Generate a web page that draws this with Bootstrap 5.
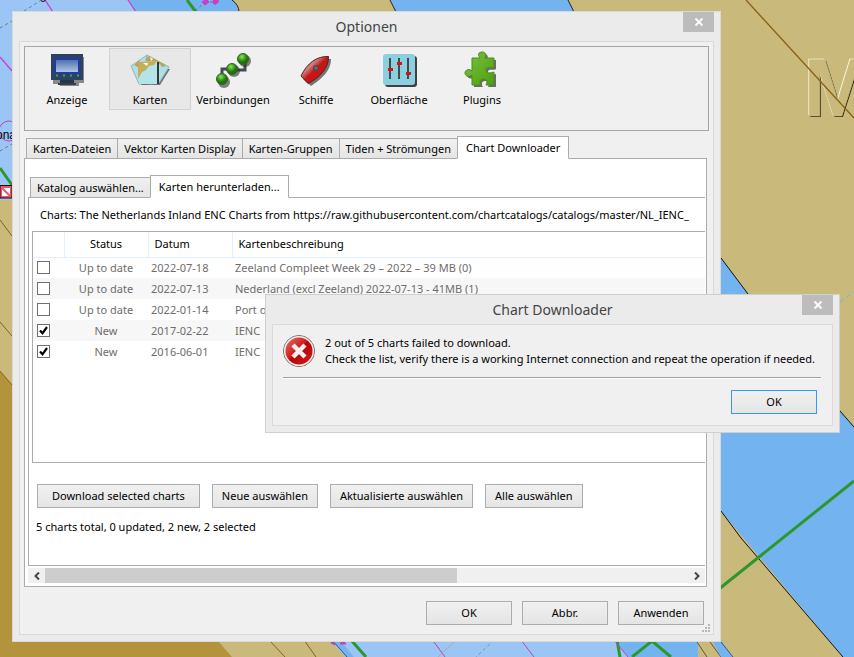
<!DOCTYPE html>
<html lang="de">
<head>
<meta charset="utf-8">
<meta name="viewport" content="width=device-width, initial-scale=1">
<title>Optionen</title>
<link href="https://cdn.jsdelivr.net/npm/bootstrap@5.3.0/dist/css/bootstrap.min.css" rel="stylesheet">
<style>
body { font: 11px/16px "Noto Sans", "Open Sans", sans-serif; color: #000; }
.desktop { height: 100vh; background: #c9b97a; }
.chart-map { width: 100%; height: 100%; }
.win { background: #ebebeb; border: 1px solid #d9d9d9; }
.win-main { left: 12px; right: 133px; top: 11px; padding: 0 6px 6px; }
.win-msg { left: 265px; right: 14px; top: 294px; padding: 0 6px 6px; border-color: #cfcfcf; }
.win-title { height: 29px; font-size: 14px; line-height: 29px; color: #444; text-align: center; }
.win-close { right: 6px; top: 0; width: 31px; height: 20px; background: #bcbcbc; border: 0; padding: 0; }
.client { background: #f0f0f0; border: 1px solid #dadada; }
.client-main { padding: 4px 4px 9px; }
.toolbox { border: 1px solid #a5a5a5; height: 85px; padding: 1px; }
.tool { width: 82px; height: 62px; margin-right: 1px; border: 1px solid transparent; background: none; padding: 2px 0 0; white-space: nowrap; color: #000; }
.tool.active { background: #e8e8e8; border-color: #d2d2d2; }
.tool svg { width: 40px; height: 40px; margin-bottom: 1px; }
.tabs { border: 0; padding-left: 2px; position: relative; }
.tabs-outer { margin-top: 5px; }
.tabs .nav-link { border: 1px solid #acacac; border-radius: 0; background: linear-gradient(#f0f0f0, #e5e5e5); color: #000; height: 21px; padding: 0 6px; line-height: 19px; margin: 0 -1px -1px 0; }
.tabs .nav-link.active { background: #fff; color: #000; height: 23px; padding: 0 8px; border-color: #acacac; border-bottom-color: #fff; }
.page { background: #fff; border: 1px solid #acacac; }
.page-outer { padding: 16px 1px 3px 3px; margin-right: 2px; }
.page-inner { border-right: 0; padding: 9px 0 30px 3px; }
.source { padding: 0 0 0 8px; margin-bottom: 8px; overflow: hidden; white-space: nowrap; }
.list { border: 1px solid #acacac; border-right: 0; height: 232px; overflow: hidden; }
.list table { width: 100%; table-layout: fixed; color: #6d6d6d; white-space: nowrap; }
.list th { height: 25px; padding: 0 6px; font-weight: 400; color: #000; border-bottom: 1px solid #e3effa; border-right: 1px solid #e3effa; }
.list th:last-child { border-right: 0; }
.list td { height: 21px; padding: 0 3px; }
.list tbody tr:nth-child(even) { background: #f7f7f7; }
.c-check { width: 31px; } .c-mid { width: 84px; }
.tick { appearance: none; display: block; width: 13px; height: 13px; margin: 0 1px; border: 1px solid #707070; background: #fff; }
.tick:checked { background: #fff url("data:image/svg+xml,%3Csvg xmlns='http://www.w3.org/2000/svg' viewBox='0 0 11 11'%3E%3Cpath d='M2 5.5 4.5 8.3 9 2' fill='none' stroke='%23000' stroke-width='2.2'/%3E%3C/svg%3E") center/11px no-repeat; }
.push { height: 24px; border: 1px solid #acacac; border-radius: 0; background: linear-gradient(#f0f0f0, #e5e5e5); color: #000; line-height: 16px; padding: 0 9px; white-space: nowrap; }
.push-wide { padding: 0 14px; }
.push-fixed { width: 86px; padding: 0; }
.push-focus { border-color: #3399ff; }
.actions { margin: 21px 0 11px 5px; gap: 12px; }
.scroll { height: 15px; margin-top: 2px; background: #f0f0f0; }
.scroll button { width: 17px; border: 0; background: none; padding: 0; line-height: 0; }
.thumb { width: 64%; background: #cdcdcd; }
.foot { gap: 10px; margin: 14px 5px 0 0; }
.grip { right: 9px; bottom: 8px; width: 9px; height: 9px; }
.msg-body { padding: 10px 11px 11px 10px; }
.msg-line { border-top: 1px solid #a0a0a0; border-bottom: 1px solid #fff; margin: 8px 0 11px; }
</style>
</head>
<body>
<main class="desktop position-relative overflow-hidden">
  <svg class="chart-map d-block" viewBox="0 0 854 657" preserveAspectRatio="xMinYMin slice" aria-hidden="true">
    <path fill="#c9b97a" d="M0 0h854v657H0z"/>
    <path fill="#9bc5f5" d="M0 0H140V200H0z"/>
    <path fill="#73b4f0" d="M129 0H232q7 5 6 12H136z"/>
    <path fill="#73b4f0" d="M391 0H568l6 12H396z"/>
    <path d="M232 0q7 5 7 12M390 0l6 12M568 0l6 12" fill="none" stroke="#222"/>
    <path fill="#b3933b" d="M0 371 12 385 240 657H0z"/>
    <path d="M0 220l12 16M0 322l12 14M0 371l12 14" stroke="#8a6118" fill="none"/>
    <path fill="#b3933b" d="M0 600H217L232 657H0z"/>
    <path fill="#c9b97a" d="M217 640H345V657H232z"/>
    <path fill="#9bc5f5" d="M330 640H630V657H345z"/>
    <path fill="#73b4f0" d="M332 640h8l14 17h-8zM614 640h84v17h-70z"/>
    <path fill="#c9b97a" d="M696 640h14l10 17h-14z"/>
    <path d="M269 640l16 17M304 640l12 17" stroke="#8a6118" fill="none"/>
    <path d="M351 640l15 17M617 640l3 17M632 657l20-16 19 16" stroke="#2e962e" stroke-width="3" fill="none"/>
    <path d="M521 640l13 17M614 640l14 17M434 642l11 15" stroke="#c63fc6" fill="none"/>
    <path d="M434 642l11 15M494 640l-18 17" stroke="#888" stroke-dasharray="3 3" fill="none"/>
    <path d="M455 641l-17 16" stroke="#aaa" fill="none"/>
    <path d="M332 641l3 4-4-2zM340 644l3-4 3 4z" stroke="#c63fc6" fill="#c63fc6"/>
    <path d="M332 640l15 17M697 642l10 15M710 642l11 15" stroke="#555" fill="none"/>
    <path fill="#73b4f0" d="M721 258 748 294 840 411 854 427V657H843L721 511z"/>
    <path d="M721 258l27 36 92 117 14 16M721 511l20 27 102 119" stroke="#111" fill="none"/>
    <path fill="#73b4f0" d="M712 640h9l12 17h-12z"/>
    <path d="M721 642l12 15" stroke="#555"/>
    <path d="M719 589 854 481" stroke="#2e962e" stroke-width="3"/>
    <path d="M840 302l14-10" stroke="#73b4f0" stroke-dasharray="5 3" fill="none"/>
    <g font-family="Liberation Sans, sans-serif" font-size="81" font-weight="700">
      <text x="805" y="117" fill="#2c2818">M</text>
      <text x="803" y="115" fill="#fbf6e2">M</text>
      <text x="804" y="116" fill="#c9b97a" stroke="#c9b97a" stroke-width=".6">M</text>
    </g>
    <path d="M746 0 854 118" stroke="#8a6118" stroke-width="1.3"/>
    <path d="M45 0l8 12M128 0l8 12M0 57l12 14" stroke="#c63fc6" stroke-width="1.3"/>
    <path d="M24 11 40 1M0 28l12-7M0 151l12-7M195 11l10-9" stroke="#777" stroke-dasharray="3 3"/>
    <path d="M187 0l9 12M0 168l12 17" stroke="#2e962e" stroke-width="3"/>
    <circle cx="9" cy="131" r="10" fill="none" stroke="#c63fc6"/>
    <circle cx="43" cy="-1" r="2.5" fill="none" stroke="#111"/>
    <path d="M202 2l4-3 3 3-4 3zM210 2h6M213-1a3 3 0 1 1 0 4" fill="#c63fc6" stroke="#c63fc6"/>
    <text x="-4" y="139" font-size="12" font-family="Liberation Sans, sans-serif">ona</text>
    <path d="M0 185.500H12V198H0z" fill="#ee5468" stroke="#111"/>
    <path d="M2 188h8v8H2z" fill="#fff"/><path d="M2 188l8 8" stroke="#ee5468" stroke-width="2"/>
  </svg>

  <section class="win win-main position-absolute" aria-label="Optionen">
    <h1 class="win-title m-0 fw-normal">Optionen</h1>
    <button class="win-close position-absolute d-flex align-items-center justify-content-center" aria-label="Schließen"><svg width="10" height="10" viewBox="0 0 10 10"><path d="M1.500 1.500l7 7m0-7l-7 7" stroke="#fff" stroke-width="1.800"/></svg></button>
    <div class="client client-main">
      <nav class="toolbox d-flex align-items-start">
        <button class="tool d-flex flex-column align-items-center"><svg viewBox="0 0 40 40"><defs><linearGradient id="scr" x2="0" y2="1"><stop stop-color="#4a6fae"/><stop offset="1" stop-color="#b0c9e8"/></linearGradient></defs><path d="M6 6h31v26h-5v3H13v-2H6z" fill="#222" opacity=".5"/><path d="M4 3h32v26H4z" fill="#2b4263"/><path d="M13 29h14v3H13z" fill="#23364f"/><path d="M11 32h18v2H11z" fill="#3a3f46"/><path d="M8.500 8.500h23v13h-23z" fill="url(#scr)" stroke="#1f2fe0"/><path d="M9 24.500h2M16 24.500h2M23 24.500h2M30 24.500h2" stroke="#27b04c" stroke-width="2"/></svg><span>Anzeige</span></button>
        <button class="tool active d-flex flex-column align-items-center"><svg viewBox="0 0 40 40"><path d="M10 34h20l10-16-9 0z" fill="#222" opacity=".6"/><path d="M1 15 17 4 12 33H9z" fill="#b0e0e6" stroke="#8fb7bb"/><path d="M17 4l22 12-10 16-10 1z" fill="#b0e0e6" stroke="#8fb7bb"/><path d="M15 9l4-4 13 7 4 3-4 1-2-3-5 1zM4 14l6-5-1 8z" fill="#bba353"/><path d="M8 11 27 10V33H9z" fill="#b5e4e8"/><path d="M8 11 27 10 24 14l-5 1-3 4-4 2-4 7z" fill="#c7ac5a"/><path d="M13 12l5 0-1 3zM20 6l3 2-2 2z" fill="#fff"/><path d="M28 11v22" stroke="#33393b" stroke-width="2"/></svg><span>Karten</span></button>
        <button class="tool d-flex flex-column align-items-center"><svg viewBox="0 0 40 40"><defs><radialGradient id="ball" cx=".4" cy=".3"><stop stop-color="#8ee860"/><stop offset=".6" stop-color="#37a319"/><stop offset="1" stop-color="#23700c"/></radialGradient></defs><path d="M9 28V18h10M22 19h10V10" stroke="#444b55" stroke-width="3" fill="none"/><g fill="#333" opacity=".6"><circle cx="11" cy="31" r="6"/><circle cx="21" cy="20" r="6"/><circle cx="32" cy="10" r="6"/></g><g fill="url(#ball)" stroke="#3a5d30"><circle cx="9" cy="28" r="5.500"/><circle cx="19" cy="18" r="5.500"/><circle cx="30" cy="8" r="5.500"/></g></svg><span>Verbindungen</span></button>
        <button class="tool d-flex flex-column align-items-center"><svg viewBox="0 0 40 40"><defs><linearGradient id="boat" x2="1" y2="1"><stop offset=".35" stop-color="#cf7d7d"/><stop offset=".5" stop-color="#c41616"/><stop offset="1" stop-color="#e00c0c"/></linearGradient></defs><path d="M7 28C14 14 24 7 35 8c0 11-8 19-20 27z" fill="#222" opacity=".6"/><path d="M5 25C11 12 21 5 32.500 5.500 33 16 24 27 12 32.500z" fill="url(#boat)" stroke="#4a2626"/><circle cx="20" cy="17" r="2.500" fill="#666" stroke="#444"/></svg><span>Schiffe</span></button>
        <button class="tool d-flex flex-column align-items-center"><svg viewBox="0 0 40 40"><rect x="6" y="5" width="32" height="31" rx="3" fill="#3c4244"/><rect x="4" y="3" width="32" height="31" rx="3" fill="#8ccfde"/><path d="M11 7v21M20 7v21M29 7v21" stroke="#3e4c50" stroke-width="2"/><path d="M9 17h5v3H9zM18 11h5v3h-5zM27 21h5v3h-5z" fill="#d01515"/></svg><span>Oberfläche</span></button>
        <button class="tool d-flex flex-column align-items-center"><svg viewBox="0 0 40 40"><defs><linearGradient id="puz" x2="1" y2="1"><stop stop-color="#7cc142"/><stop offset="1" stop-color="#4c9f10"/></linearGradient><path id="piece" d="M11 5h8C16 1 18-1 21-1s5 2 3 6h9v9c-3 2-8-1-8 3s5 3 8 2v13h-8c2-4 0-6-3-6s-4 3-2 6h-9V22c-3 3-7 1-7-2s4-5 7-2z"/></defs><use href="#piece" x="1" y="4" fill="#333" opacity=".7"/><use href="#piece" x="-1" y="2" fill="url(#puz)" stroke="#4b8d1c"/></svg><span>Plugins</span></button>
      </nav>
      <div class="nav nav-tabs tabs tabs-outer align-items-end flex-nowrap text-nowrap" role="tablist">
        <button class="nav-link" role="tab">Karten-Dateien</button>
        <button class="nav-link" role="tab">Vektor Karten Display</button>
        <button class="nav-link" role="tab">Karten-Gruppen</button>
        <button class="nav-link" role="tab">Tiden + Strömungen</button>
        <button class="nav-link active" role="tab" aria-selected="true">Chart Downloader</button>
      </div>
      <div class="page page-outer">
        <div class="nav nav-tabs tabs align-items-end flex-nowrap text-nowrap" role="tablist">
          <button class="nav-link" role="tab">Katalog auswählen...</button>
          <button class="nav-link active" role="tab" aria-selected="true">Karten herunterladen...</button>
        </div>
        <div class="page page-inner">
          <div class="source">Charts: The Netherlands Inland ENC Charts from https://raw.githubusercontent.com/chartcatalogs/catalogs/master/NL_IENC_</div>
          <div class="list">
            <table>
              <colgroup><col class="c-check"><col class="c-mid"><col class="c-mid"><col></colgroup>
              <thead><tr><th></th><th class="text-center">Status</th><th>Datum</th><th>Kartenbeschreibung</th></tr></thead>
              <tbody>
                <tr><td><input class="tick" type="checkbox" aria-label="Zeeland Compleet"></td><td class="text-center">Up to date</td><td>2022-07-18</td><td>Zeeland Compleet Week 29 – 2022 – 39 MB (0)</td></tr>
                <tr><td><input class="tick" type="checkbox" aria-label="Nederland"></td><td class="text-center">Up to date</td><td>2022-07-13</td><td>Nederland (excl Zeeland) 2022-07-13 - 41MB (1)</td></tr>
                <tr><td><input class="tick" type="checkbox" aria-label="Port"></td><td class="text-center">Up to date</td><td>2022-01-14</td><td>Port o</td></tr>
                <tr><td><input class="tick" type="checkbox" checked aria-label="IENC 2017"></td><td class="text-center">New</td><td>2017-02-22</td><td>IENC</td></tr>
                <tr><td><input class="tick" type="checkbox" checked aria-label="IENC 2016"></td><td class="text-center">New</td><td>2016-06-01</td><td>IENC</td></tr>
              </tbody>
            </table>
          </div>
          <div class="actions d-flex">
            <button class="push push-wide">Download selected charts</button>
            <button class="push">Neue auswählen</button>
            <button class="push">Aktualisierte auswählen</button>
            <button class="push">Alle auswählen</button>
          </div>
          <div class="ps-1">5 charts total, 0 updated, 2 new, 2 selected</div>
        </div>
        <div class="scroll d-flex">
          <button aria-label="Nach links"><svg width="8" height="8" viewBox="0 0 8 8"><path d="M6 0.500 2.500 4 6 7.500" fill="none" stroke="#444" stroke-width="2"/></svg></button>
          <div class="flex-grow-1 d-flex"><div class="thumb"></div></div>
          <button aria-label="Nach rechts"><svg width="8" height="8" viewBox="0 0 8 8"><path d="M2 0.500 5.500 4 2 7.500" fill="none" stroke="#444" stroke-width="2"/></svg></button>
        </div>
      </div>
      <div class="foot d-flex justify-content-end">
        <button class="push push-fixed">OK</button>
        <button class="push push-fixed">Abbr.</button>
        <button class="push push-fixed">Anwenden</button>
      </div>
    </div>
    <svg class="grip position-absolute" viewBox="0 0 9 9" aria-hidden="true"><path d="M6 0h2v2H6zM3 3h2v2H3zM6 3h2v2H6zM0 6h2v2H0zM3 6h2v2H3zM6 6h2v2H6z" fill="#b8b8b8"/></svg>
  </section>

  <section class="win win-msg position-absolute" role="dialog" aria-label="Chart Downloader">
    <h2 class="win-title m-0 fw-normal">Chart Downloader</h2>
    <button class="win-close position-absolute d-flex align-items-center justify-content-center" aria-label="Schließen"><svg width="10" height="10" viewBox="0 0 10 10"><path d="M1.500 1.500l7 7m0-7l-7 7" stroke="#fff" stroke-width="1.800"/></svg></button>
    <div class="client msg-body">
      <div class="d-flex">
        <svg class="flex-shrink-0 me-2" width="34" height="34" viewBox="1 1 34 34" aria-hidden="true"><defs><linearGradient id="err" x2="1" y2="1"><stop stop-color="#e88080"/><stop offset=".45" stop-color="#cf1d1d"/><stop offset=".5" stop-color="#b80404"/><stop offset="1" stop-color="#d42020"/></linearGradient></defs><circle cx="17" cy="17" r="15.500" fill="url(#err)" stroke="#777"/><circle cx="17" cy="17" r="14.300" fill="none" stroke="#eee" stroke-width="1.500"/><path d="M11 11l12 12m0-12l-12 12" stroke="#f4f0f0" stroke-width="4.500"/></svg>
        <div class="text-nowrap">2 out of 5 charts failed to download.<br>Check the list, verify there is a working Internet connection and repeat the operation if needed.</div>
      </div>
      <div class="msg-line"></div>
      <div class="d-flex justify-content-end pe-1"><button class="push push-fixed push-focus">OK</button></div>
    </div>
  </section>
</main>
<script src="https://cdn.jsdelivr.net/npm/bootstrap@5.3.0/dist/js/bootstrap.bundle.min.js"></script>
</body>
</html>
